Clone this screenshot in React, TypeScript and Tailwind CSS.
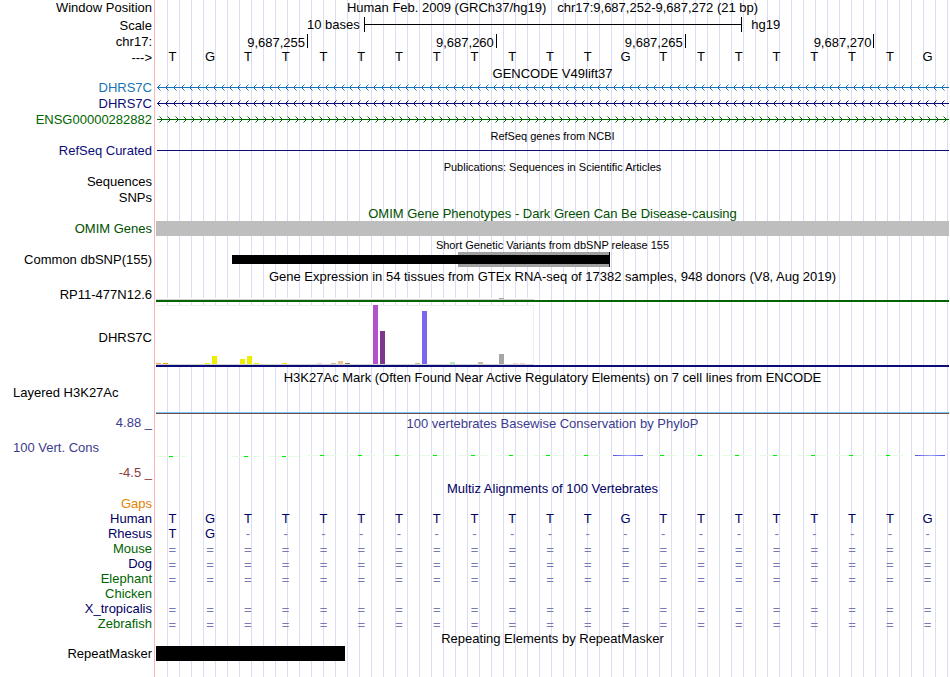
import type { ReactNode } from "react";

const SEQUENCE = "TGTTTTTTTTTTGTTTTTTTG".split("");

const COLS = "grid grid-cols-[repeat(21,minmax(0,1fr))]";

const POSITIONS = ["9,687,255", "9,687,260", "9,687,265", "9,687,270"];

type Bar = { height: number; color: string };

const EXPRESSION: Record<number, Bar> = {
  0: { height: 1, color: "#ffa54f" },
  1: { height: 1, color: "#ee9a00" },
  7: { height: 1, color: "#eeee00" },
  8: { height: 8, color: "#eeee00" },
  12: { height: 5, color: "#eeee00" },
  13: { height: 8, color: "#eeee00" },
  14: { height: 1, color: "#eeee00" },
  18: { height: 1, color: "#eeee00" },
  23: { height: 1, color: "#eed5d2" },
  25: { height: 1, color: "#cdb79e" },
  26: { height: 3, color: "#eec591" },
  27: { height: 1, color: "#8b7355" },
  31: { height: 59, color: "#b452cd" },
  32: { height: 33, color: "#7a378b" },
  37: { height: 1, color: "#cdb79e" },
  38: { height: 53, color: "#7a67ee" },
  42: { height: 2, color: "#b4eeb4" },
  46: { height: 2, color: "#cdb79e" },
  49: { height: 10, color: "#a6a6a6" },
  51: { height: 1, color: "#eed5d2" },
  52: { height: 1, color: "#eed5d2" },
};

const SPECIES = [
  { name: "Human", color: "text-[#000064]", bases: SEQUENCE },
  {
    name: "Rhesus",
    color: "text-[#000064]",
    bases: SEQUENCE.map((base, i) => (i < 2 ? base : "-")),
  },
  { name: "Mouse", color: "text-[#006400]", bases: SEQUENCE.map(() => "=") },
  { name: "Dog", color: "text-[#000064]", bases: SEQUENCE.map(() => "=") },
  { name: "Elephant", color: "text-[#006400]", bases: SEQUENCE.map(() => "=") },
  { name: "Chicken", color: "text-[#006400]", bases: [] },
  {
    name: "X_tropicalis",
    color: "text-[#000064]",
    bases: SEQUENCE.map(() => "="),
  },
  {
    name: "Zebrafish",
    color: "text-[#006400]",
    bases: SEQUENCE.map(() => "="),
  },
];

type RowProps = {
  label?: ReactNode;
  height: string;
  color?: string;
  children?: ReactNode;
};

const Row = ({ label, height, color = "text-black", children }: RowProps) => (
  <div className={`flex ${height}`}>
    <div
      className={`flex w-[156px] shrink-0 items-center justify-end pr-1 whitespace-nowrap ${
        height === "h-4" ? "pb-px" : ""
      } ${color}`}
    >
      {label}
    </div>
    <div className="min-w-0 flex-1">{children}</div>
  </div>
);

type TitleProps = { children: ReactNode; color?: string; small?: boolean };

const Title = ({ children, color = "text-black", small }: TitleProps) => (
  <h2
    className={`flex h-full items-center justify-center whitespace-pre ${color} ${
      small ? "pt-[2px] text-[11px]" : "text-[13px]"
    }`}
  >
    {children}
  </h2>
);

const baseStyle = (base: string) => {
  if (base === "=") return "self-end leading-[13px] text-[#7878b4]";
  if (base === "-") return "text-[#7878b4]";
  return "";
};

const Bases = ({ bases }: { bases: string[] }) => (
  <div className={`${COLS} h-full items-center`}>
    {bases.map((base, i) => (
      <span key={i} className={`pr-[5px] text-center ${baseStyle(base)}`}>
        {base}
      </span>
    ))}
  </div>
);

type StrandProps = { id: string; color: string; reverse?: boolean };

const Strand = ({ id, color, reverse }: StrandProps) => (
  <svg className="block h-4 w-full" shapeRendering="crispEdges">
    <defs>
      <pattern id={id} x="1" width="8" height="16" patternUnits="userSpaceOnUse">
        <path
          d={
            reverse
              ? "M0 7h1v1h-1z M1 6h1v1h-1z M1 8h1v1h-1z M2 5h1v1h-1z M2 9h1v1h-1z"
              : "M5 7h1v1h-1z M4 6h1v1h-1z M4 8h1v1h-1z M3 5h1v1h-1z M3 9h1v1h-1z"
          }
          fill={color}
        />
        <path
          d={
            reverse
              ? "M3 4h1v1h-1z M3 10h1v1h-1z"
              : "M2 4h1v1h-1z M2 10h1v1h-1z"
          }
          fill={color}
          opacity="0.5"
        />
      </pattern>
    </defs>
    <rect width="100%" height="16" fill={`url(#${id})`} />
    <rect x="1" y="7" width="100%" height="1" fill={color} />
  </svg>
);

const Expression = () => (
  <div className="flex h-full flex-col pt-px">
    <div className="flex h-[60px] w-[378px] items-end gap-[2px] border-t border-r border-b border-t-[#f0f0f0] border-r-[#f0f0f0] border-b-[#d3d3d3] bg-white">
      {Array.from({ length: 54 }, (_, i) => (
        <div
          key={i}
          className="w-[5px] shrink-0"
          style={{
            height: EXPRESSION[i]?.height ?? 0,
            background: EXPRESSION[i]?.color,
          }}
        />
      ))}
    </div>
    <div className="h-[2px] bg-[#0c0c78]" />
  </div>
);

const Conservation = () => (
  <div className={`${COLS} pt-6`}>
    {SEQUENCE.map((base, i) => {
      if (base === "G") {
        return (
          <div key={i} className="pr-px">
            {i > 1 && (
              <div className="mx-auto h-px w-[30px] bg-linear-to-r from-[#5050e6] via-[#a0a0f0] to-[#5050e6]" />
            )}
          </div>
        );
      }
      return (
        <div key={i} className={i < 4 ? "pt-px pr-2" : "pr-2"}>
          <div className="flex h-px justify-center bg-[#e6fae6]">
            <div className="w-1 bg-[#00f000]" />
          </div>
        </div>
      );
    })}
  </div>
);

const App = () => {
  return (
    <main className="relative min-h-screen bg-white pr-px font-['Liberation_Sans',Arial,sans-serif] text-[13px] leading-[15px] text-black">
      {/* guide lines behind every track */}
      <div className="absolute inset-y-0 right-px left-[154px] border-l border-[#ffb4b4] pl-px">
        <div className="h-full bg-[repeating-linear-gradient(to_right,transparent_0px,transparent_11px,#dcdcf5_11px,#dcdcf5_12px)]" />
      </div>

      <div className="relative">
        <Row label="Window Position" height="h-4">
          <div className="h-[15px]">
            <Title>
              {
                "Human Feb. 2009 (GRCh37/hg19)   chr17:9,687,252-9,687,272 (21 bp)"
              }
            </Title>
          </div>
        </Row>
        <Row label="Scale" height="h-[18px]">
          <div className="grid grid-cols-[repeat(42,minmax(0,1fr))] pt-px">
            <span className="col-span-11 pr-1 text-right">10 bases</span>
            <div className="col-span-20 -mr-px flex h-[15px] items-center border-x border-black">
              <div className="h-px w-full bg-black" />
            </div>
            <span className="col-span-11 pl-[10px]">hg19</span>
          </div>
        </Row>
        <Row label="chr17:" height="h-4">
          <div className={COLS}>
            {POSITIONS.map((position, i) => (
              <div
                key={position}
                className={`-mr-px flex h-[14px] items-center justify-end border-r border-black pt-[2px] pr-[2px] ${
                  i === 0 ? "col-span-4" : "col-span-5"
                }`}
              >
                {position}
              </div>
            ))}
          </div>
        </Row>
        <Row label="--->" height="h-4">
          <div className="leading-[13px]">
            <Bases bases={SEQUENCE} />
          </div>
        </Row>

        <Row height="h-[14px]">
          <Title>GENCODE V49lift37</Title>
        </Row>
        <Row label="DHRS7C" height="h-4" color="text-[#1874b4]">
          <Strand id="dhrs7c-alt" color="#1874b4" reverse />
        </Row>
        <Row label="DHRS7C" height="h-4" color="text-[#0c0c78]">
          <Strand id="dhrs7c" color="#0c0c78" reverse />
        </Row>
        <Row label="ENSG00000282882" height="h-4" color="text-[#006400]">
          <Strand id="ensg" color="#006400" />
        </Row>

        <Row height="h-[15px]">
          <Title small>RefSeq genes from NCBI</Title>
        </Row>
        <Row label="RefSeq Curated" height="h-[15px]" color="text-[#0c0c78]">
          <div className="flex h-full items-center pl-px">
            <div className="h-px w-full bg-[#0c0c78]" />
          </div>
        </Row>

        <Row height="h-4">
          <Title small>Publications: Sequences in Scientific Articles</Title>
        </Row>
        <Row label="Sequences" height="h-4" />
        <Row label="SNPs" height="h-4" />

        <Row height="h-[15px]">
          <Title color="text-[#005000]">
            OMIM Gene Phenotypes - Dark Green Can Be Disease-causing
          </Title>
        </Row>
        <Row label="OMIM Genes" height="h-[15px]" color="text-[#005000]">
          <div className="h-full bg-[#bebebe]" />
        </Row>

        <Row height="h-4">
          <Title small>Short Genetic Variants from dbSNP release 155</Title>
        </Row>
        <Row label="Common dbSNP(155)" height="h-[15px]">
          <div className={`${COLS} h-full grid-rows-1 items-center`}>
            <div className="col-start-9 col-end-13 row-start-1 -mr-px h-full border-r border-black bg-[#a0a0a0]" />
            <div className="col-start-3 col-end-13 row-start-1 -mr-px h-[9px] bg-black" />
          </div>
        </Row>

        <Row height="h-[18px]">
          <Title>
            Gene Expression in 54 tissues from GTEx RNA-seq of 17382 samples,
            948 donors (V8, Aug 2019)
          </Title>
        </Row>
        <Row label="RP11-477N12.6" height="h-[19px]">
          <div className="flex h-full flex-col pt-[13px]">
            <div className="h-[2px] w-[378px] border-b border-[#d3d3d3] bg-white pl-[343px]">
              <div className="h-px w-[5px] bg-[#a6a6a6]" />
            </div>
            <div className="h-[2px] bg-[#006400]" />
          </div>
        </Row>
        <Row label={<span className="pt-1">DHRS7C</span>} height="h-[63px]">
          <Expression />
        </Row>

        <Row height="h-[18px]">
          <div className="h-5">
            <Title>
              H3K27Ac Mark (Often Found Near Active Regulatory Elements) on 7
              cell lines from ENCODE
            </Title>
          </div>
        </Row>
        <div className="flex h-[30px]">
          <div className="w-[156px] shrink-0 pl-[13px]">Layered H3K27Ac</div>
          <div className="flex flex-1 flex-col justify-end pb-px">
            <div className="h-px bg-[#73c8fa]" />
            <div className="h-px bg-[#735046]" />
          </div>
        </div>

        <Row label="4.88 _" height="h-4" color="text-[#3c3c8c]">
          <Title color="text-[#3c3c8c]">
            100 vertebrates Basewise Conservation by PhyloP
          </Title>
        </Row>
        <div className="flex h-[50px]">
          <div className="flex w-[156px] shrink-0 flex-col justify-between pt-[9px] pr-1 pb-px pl-[13px]">
            <div className="text-[#3c3c8c]">100 Vert. Cons</div>
            <div className="text-right text-[#8c3c3c]">-4.5 _</div>
          </div>
          <div className="min-w-0 flex-1">
            <Conservation />
          </div>
        </div>

        <Row height="h-[15px]">
          <Title color="text-[#000064]">
            Multiz Alignments of 100 Vertebrates
          </Title>
        </Row>
        <Row label="Gaps" height="h-[15px]" color="text-[#e68200]" />
        {SPECIES.map(({ name, color, bases }) => (
          <Row key={name} label={name} height="h-[15px]" color={color}>
            <div className="h-full text-[#000064]">
              <Bases bases={bases} />
            </div>
          </Row>
        ))}

        <Row height="h-[15px]">
          <Title>Repeating Elements by RepeatMasker</Title>
        </Row>
        <Row label="RepeatMasker" height="h-[15px]">
          <div className={`${COLS} h-full`}>
            <div className="col-span-5 bg-black" />
          </div>
        </Row>
      </div>
    </main>
  );
};

export default App;
